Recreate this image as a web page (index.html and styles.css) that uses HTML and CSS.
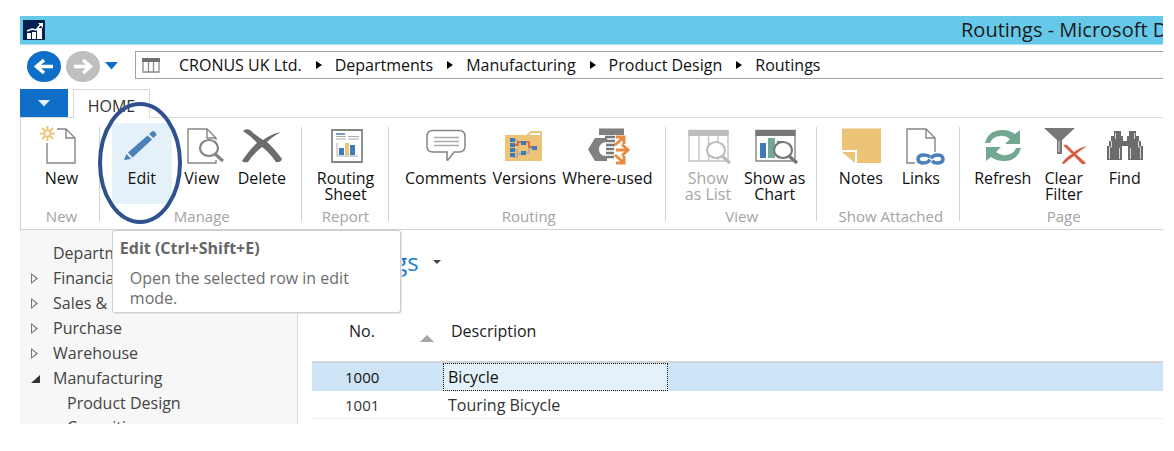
FILE: index.html
```html
<!DOCTYPE html>
<html lang="en">
<head>
<meta charset="utf-8">
<title>Routings</title>
<link rel="stylesheet" href="styles.css">
</head>
<body>
<div class="window">
  <header class="titlebar">
    <svg class="app-icon" viewBox="0 0 22 20" aria-hidden="true"><rect width="22" height="20" fill="#04204f"/><path d="M4 13h4v6H4zM9 12h4v7H9zM14 8h5v11h-5z" fill="#fff"/><path d="M4 11l5-2 4 1 5-6" fill="none" stroke="#fff" stroke-width="1.500"/><path d="M15 3h5v5z" fill="#fff"/></svg>
    <span class="window-title">Routings - Microsoft D</span>
  </header>

  <div class="navbar">
    <button class="nav-btn" aria-label="Back"><svg width="34" height="31" viewBox="0 0 34 31"><ellipse cx="17" cy="15.500" rx="17" ry="15.500" fill="#0f6fc8"/><path d="M26 15.500H10M17 9l-7.500 6.500L17 22" fill="none" stroke="#fff" stroke-width="3.500"/></svg></button>
    <button class="nav-btn" aria-label="Forward"><svg width="34" height="31" viewBox="0 0 34 31"><ellipse cx="17" cy="15.500" rx="17" ry="15.500" fill="#bfbfbf"/><path d="M8 15.500h16M17 9l7.500 6.500L17 22" fill="none" stroke="#fff" stroke-width="3.500"/></svg></button>
    <button class="nav-btn" aria-label="History"><svg width="13" height="8" viewBox="0 0 13 8"><path d="M0 0h13L6.500 7.500z" fill="#0f6fc8"/></svg></button>
    <nav class="address" aria-label="Breadcrumb">
      <svg class="address-icon" width="18" height="15" viewBox="0 0 18 15"><path d="M1 1h16v13H1zM6.500 4v10M11.500 4v10" fill="none" stroke="#8b8b8b" stroke-width="1.300"/><path d="M0 0h18v4H0z" fill="#707070"/></svg>
      <a href="#">CRONUS UK Ltd.</a><i class="crumb-arrow"></i>
      <a href="#">Departments</a><i class="crumb-arrow"></i>
      <a href="#">Manufacturing</a><i class="crumb-arrow"></i>
      <a href="#">Product Design</a><i class="crumb-arrow"></i>
      <a href="#">Routings</a>
    </nav>
  </div>

  <div class="tabs">
    <button class="file-tab" aria-label="Application menu"><svg width="12" height="7" viewBox="0 0 12 7"><path d="M0 0h12L6 6.500z" fill="#e6f2fb"/></svg></button>
    <button class="tab">HOME</button>
  </div>

  <div class="ribbon">
    <section class="group g-new">
      <div class="tools">
        <button class="tool"><svg class="icon" viewBox="0 0 44 40"><path d="M7 17v20h28V12l-9-9h-9M26 3v9h9" fill="none" stroke="#858585" stroke-width="1.400"/><path d="M7.500 0v5M7.500 10v5M0 7.500h5M10 7.500h5M2 2l3.500 3.500M9.500 9.500L13 13M13 2L9.500 5.500M5.500 9.500L2 13" stroke="#eec377" stroke-width="2"/><circle cx="7.500" cy="7.500" r="3" fill="none" stroke="#eec377" stroke-width="1.500"/></svg><span>New</span></button>
      </div>
      <h2>New</h2>
    </section>
    <section class="group g-manage">
      <div class="tools">
        <div class="tool-anchor">
          <button class="tool active" aria-describedby="edit-tip"><svg class="icon" viewBox="0 0 44 40"><path d="M4 34l2.500-6 4.500 5zM8 26.500L27.500 9.500l4.500 4L12.500 31.500zM29 8l3-2.500q1.500-1 3 .5t1.500 3L33.500 12z" fill="#4a81b9"/></svg><span>Edit</span></button>
          <div class="tooltip" id="edit-tip" role="tooltip"><strong>Edit (Ctrl+Shift+E)</strong><p>Open the selected row in edit mode.</p></div>
          <svg class="marker" viewBox="0 0 84 122" aria-hidden="true"><ellipse cx="42" cy="61" rx="40" ry="59" fill="none" stroke="#2f528f" stroke-width="4"/></svg>
        </div>
        <button class="tool"><svg class="icon" viewBox="0 0 44 40"><path d="M36 14v-2l-9-9H8v34h28v-3M27 3v9h9" fill="none" stroke="#858585" stroke-width="1.400"/><ellipse cx="29" cy="22" rx="9" ry="8" fill="#fff" stroke="#858585" stroke-width="2.200"/><path d="M35 28l8 7" stroke="#858585" stroke-width="3.400"/></svg><span>View</span></button>
        <button class="tool"><svg class="icon" viewBox="0 0 44 40"><path d="M3 5q3-3 7-1 5 5 13 10 10-7 18-8-9 5-14 10 7 6 15 17-2 4-6 3-7-10-14-15-8 6-14 15-5 1-6-1 7-11 15-18Q11 10 3 5z" fill="#6c6c6c"/></svg><span>Delete</span></button>
      </div>
      <h2>Manage</h2>
    </section>
    <section class="group g-report">
      <div class="tools">
        <button class="tool"><svg class="icon" viewBox="0 0 44 40"><path d="M8 4h30v32H8z" fill="#fff" stroke="#858585" stroke-width="1.800"/><path d="M12 8h9" stroke="#4a81b9" stroke-width="1.500"/><path d="M12 10.500h10M12 13h10M24 10.500h11M24 13h11M13 17v13h21" fill="none" stroke="#aaa"/><path d="M15 22h5v7h-5zM26 19h5v10h-5z" fill="#3d7ab8"/><path d="M21 17h4v12h-4z" fill="#edc477"/></svg><span>Routing<br>Sheet</span></button>
      </div>
      <h2>Report</h2>
    </section>
    <section class="group g-routing">
      <div class="tools roomy">
        <button class="tool"><svg class="icon" viewBox="0 0 44 40"><path d="M9 4.500h26q6 0 6 6V20q0 6-6 6h-5l-6 8h-1v-8H9q-6 0-6-6v-9.500q0-6 6-6z" fill="#fff" stroke="#858585" stroke-width="1.500"/><path d="M10 11.500h25M10 15.500h25M10 19.500h25" stroke="#aaa" stroke-width="1.400"/></svg><span>Comments</span></button>
        <button class="tool"><svg class="icon" viewBox="0 0 44 40"><path d="M3 9h21l5-4h11v30H3z" fill="#edc477"/><path d="M27 9l3-2h8v2z" fill="#fff"/><path d="M11 14h4v5M12 24h3v7h-4M15 28h8M24 27h3v-5h4" fill="none" stroke="#a9a9a9" stroke-width="1.300"/><path d="M12 19h4v-3h11v5h5" fill="none" stroke="#dc5535" stroke-width="1.600"/><path d="M8 12h5v4H8zM8 17h5v4H8zM8 22h5v4H8zM8 27h5v4H8zM19 15h5v4h-5zM19 25h5v4h-5zM30 20h5v4h-5z" fill="#3d7ab8"/></svg><span>Versions</span></button>
        <button class="tool"><svg class="icon" viewBox="0 0 44 40"><path d="M14 2.500h25V9H14zM10 12h12v4h-1q-7 1-7 7.500t7 6.500h1v5H10L3 23.500z" fill="#808080"/><path d="M20 11h10M21 15h9M21 19h9M21 23h8M21 27h8M21 31h8" stroke="#777" stroke-width="2.500"/><path d="M31 24h12" stroke="#e98b3e" stroke-width="3"/><path d="M37 18.500l6 5.500-6 5.500M30 19l9-8M31 11h8v7M30 29l9 8M39 30v7h-8" fill="none" stroke="#e98b3e" stroke-width="3"/></svg><span>Where-used</span></button>
      </div>
      <h2>Routing</h2>
    </section>
    <section class="group g-view">
      <div class="tools roomy">
        <button class="tool" disabled><svg class="icon" viewBox="0 0 44 40"><path d="M3 4.500h39V35H3zM13 10v25M22.500 10v25M32 10v25" fill="none" stroke="#c4c4c4" stroke-width="1.400"/><path d="M2.500 4h40v6h-40z" fill="#bdbdbd"/><ellipse cx="30" cy="24" rx="9" ry="8" fill="#fff" stroke="#bdbdbd" stroke-width="2.200"/><path d="M36 30l8 7" stroke="#bdbdbd" stroke-width="3.400"/></svg><span>Show<br>as List</span></button>
        <button class="tool"><svg class="icon" viewBox="0 0 44 40"><path d="M3 4.500h39V35H3z" fill="none" stroke="#858585" stroke-width="1.400"/><path d="M2.500 4h40v6h-40z" fill="#777"/><path d="M7 17h6v15H7z" fill="#3d7ab8"/><path d="M15 12h7v20h-7z" fill="#72a892"/><path d="M24 15h6v17h-6z" fill="#777"/><ellipse cx="30" cy="24" rx="9" ry="8" fill="#fff" stroke="#777" stroke-width="2.200"/><path d="M36 30l8 7" stroke="#777" stroke-width="3.400"/></svg><span>Show as<br>Chart</span></button>
      </div>
      <h2>View</h2>
    </section>
    <section class="group g-attached">
      <div class="tools">
        <button class="tool"><svg class="icon" viewBox="0 0 44 40"><path d="M3 2.500h39V37H18V24H3zM3 26h13v11z" fill="#edc477"/></svg><span>Notes</span></button>
        <button class="tool"><svg class="icon" viewBox="0 0 44 40"><path d="M36 26V12l-9-9H8v34h8M27 3v9h9" fill="none" stroke="#858585" stroke-width="1.400"/><g fill="none" stroke="#4a81b9" stroke-width="3.500"><path d="M31 33.500q-2 3.500-6 3.500-6 0-6-4t6-4q4 0 6 2"/><path d="M33 35q2 2 5 2 6 0 6-4t-6-4q-4 0-6 3.500"/></g></svg><span>Links</span></button>
      </div>
      <h2>Show Attached</h2>
    </section>
    <section class="group g-page">
      <div class="tools">
        <button class="tool"><svg class="icon" viewBox="0 0 44 40"><path d="M4 17Q7 5 20 4q8-.5 14 4l5-4v14H24l5-5q-5-4-10-3-8 1-10 7z" fill="#72a892"/><path d="M4 17Q7 5 20 4q8-.5 14 4l5-4v14H24l5-5q-5-4-10-3-8 1-10 7z" fill="#72a892" transform="rotate(180 22 19.500)"/></svg><span>Refresh</span></button>
        <button class="tool"><svg class="icon" viewBox="0 0 44 40"><path d="M2 2h31L20 14v14h-5V14z" fill="#777"/><path d="M17 15v11" stroke="#ddd"/><path d="M21 19q3-1 5 1l6 6q7-5 13-6-6 4-11 8l10 9q-2 2-4 1l-8-8q-6 4-10 8-2 0-2-1 4-6 10-9z" fill="#da5c3f"/></svg><span>Clear<br>Filter</span></button>
        <button class="tool"><svg class="icon" viewBox="0 0 44 40"><path d="M4 34V20h2v-5h2v-5h3V5h7v5h2v5h4v-5h2V5h7v5h3v5h2v5h2v14H25V20h-6v14z" fill="#6c6c6c"/><path d="M6.500 33V21h2v-6M12.500 13V7M16.500 22v11M27.500 22v11M37.500 33V21h-2v-6M31.500 13V7" fill="none" stroke="#d9d9d9"/></svg><span>Find</span></button>
      </div>
      <h2>Page</h2>
    </section>
  </div>

  <div class="body">
    <nav class="sidebar" aria-label="Departments">
      <ul>
        <li><a href="#">Departments</a></li>
        <li class="closed"><a href="#">Financial Management</a></li>
        <li class="closed"><a href="#">Sales &amp; Marketing</a></li>
        <li class="closed"><a href="#">Purchase</a></li>
        <li class="closed"><a href="#">Warehouse</a></li>
        <li class="open"><a href="#">Manufacturing</a>
          <ul class="sub"><li><a href="#">Product Design</a></li><li><a href="#">Capacities</a></li></ul>
        </li>
      </ul>
    </nav>
    <main class="content">
      <h1>Routings <i class="title-caret"></i></h1>
      <table>
        <colgroup><col class="col-no"><col class="col-desc"><col></colgroup>
        <thead><tr><th class="no">No.<i class="sort"></i></th><th class="desc">Description</th><th></th></tr></thead>
        <tbody>
          <tr class="selected"><td class="no">1000</td><td class="focused">Bicycle</td><td></td></tr>
          <tr><td class="no">1001</td><td>Touring Bicycle</td><td></td></tr>
        </tbody>
      </table>
    </main>
  </div>
</div>
</body>
</html>
```
FILE: styles.css
```css
* { box-sizing: border-box; }
body {
  margin: 0;
  height: 100vh;
  padding: 16px 11px 27px 20px;
  background: #fff;
  color: #1a1a1a;
  font: 16px/20px "Open Sans", "Noto Sans", sans-serif;
}
button { border: 0; padding: 0; background: none; font: inherit; color: inherit; }
a { color: inherit; text-decoration: none; }
h1, h2, p, ul { margin: 0; padding: 0; font-weight: normal; list-style: none; }
svg { display: block; }

.window { height: 100%; display: flex; flex-direction: column; overflow: hidden; }

.titlebar {
  flex: none;
  height: 29px;
  display: flex;
  align-items: center;
  justify-content: space-between;
  padding-left: 3px;
  background: #66c9e9;
  border-bottom: 1px solid #a9e0f2;
}
.app-icon { width: 22px; height: 20px; }
.window-title { width: 202px; overflow: hidden; white-space: nowrap; font-size: 20px; line-height: 28px; }

.navbar { flex: none; height: 44px; display: flex; align-items: center; gap: 5px; padding-left: 7px; }
.nav-btn { flex: none; margin-bottom: 2px; }
.address {
  flex: 1;
  height: 28px;
  margin: 0 0 4px 12px;
  display: flex;
  align-items: center;
  border: 1px solid #a3a3a3;
  border-right: 0;
  padding-left: 6px;
  white-space: nowrap;
  color: #111;
}
.address-icon { margin-right: 19px; }
.crumb-arrow {
  margin: 0 13px 0 14px;
  border: 4px solid transparent;
  border-left: 6px solid #000;
  border-right: 0;
}

.tabs { flex: none; height: 29px; display: flex; align-items: stretch; gap: 5px; border-bottom: 1px solid #dcdcdc; }
.file-tab { width: 48px; display: flex; align-items: center; justify-content: center; background: #0f6fc8; }
.tab { width: 77px; margin-bottom: -1px; padding-top: 4px; border: 1px solid #d9d9d9; border-bottom: 0; background: #fff; color: #333; }

.ribbon { flex: none; display: flex; height: 112px; padding: 5px 0 0; border: 1px solid #d2d2d2; border-top: 0; border-right: 0; }
.group { position: relative; display: flex; flex-direction: column; justify-content: space-between; padding: 0 0 3px 2px; min-width: 0; }
.group::after { content: ""; position: absolute; right: 0; top: 4px; bottom: 8px; border-right: 1px solid #d4d4d4; }
.group:last-child::after { display: none; }
.group h2 { text-align: center; font-size: 15px; line-height: 20px; color: #a3a3a3; white-space: nowrap; }
.g-new { flex: 78 1 0; }
.g-manage { flex: 202 1 0; }
.g-report { flex: 89 1 0; padding-left: 0; }
.g-routing { flex: 278 1 0; }
.g-view { flex: 153 1 0; padding-left: 0; }
.g-attached { flex: 141 1 0; padding-left: 4px; }
.g-page { flex: 201 1 0; padding-left: 4px; }
.tools { display: flex; justify-content: center; }
.roomy { gap: 6px; }
.g-page .tools { gap: 1px; }
.tool { min-width: 60px; height: 81px; padding-top: 3px; display: flex; flex-direction: column; align-items: center; line-height: 16px; color: #111; white-space: nowrap; }
.tool span { margin-top: 4px; }
.tool:disabled { color: #a6a6a6; }
.tool.active { background: #e5f1f9; }
.icon { width: 44px; height: 40px; overflow: visible; }
.tool-anchor { position: relative; }
.marker { position: absolute; z-index: 3; left: -14px; top: -21px; width: 84px; height: 122px; pointer-events: none; }
.tooltip {
  position: absolute;
  z-index: 2;
  left: 0;
  top: 107px;
  width: 289px;
  padding: 7px 7px 4px;
  border: 1px solid #cfcfcf;
  border-radius: 3px;
  background: #fff;
  box-shadow: 1px 1px 1px #e4e4e4;
  color: #6d6d6d;
}
.tooltip strong { display: block; color: #666; }
.tooltip p { padding: 10px 20px 0 10px; }

.body { flex: 1; min-height: 0; display: flex; overflow: hidden; }
.sidebar { flex: none; width: 278px; padding-top: 11px; background: #f7f7f7; border-right: 1px solid #d9d9d9; color: #444; overflow: hidden; }
.sidebar li { position: relative; padding-left: 33px; line-height: 25px; white-space: nowrap; }
.sidebar .sub li { padding-left: 14px; line-height: 24px; }
.closed::before, .open::before { content: ""; position: absolute; left: 11px; top: 7px; }
.closed::before { width: 7px; height: 11px; background: #777; clip-path: polygon(evenodd, 0 0, 100% 50%, 0 100%, 0 0, 1px 2px, 1px 9px, 5px 50%, 1px 2px); }
.open::before { top: 9px; border-left: 9px solid transparent; border-bottom: 8px solid #333; }

.content { flex: 1; min-width: 0; padding: 16px 0 0 14px; }
h1 { display: flex; align-items: center; gap: 14px; padding-left: 9px; font-size: 24px; line-height: 32px; color: #2079d0; }
.title-caret { border: 4px solid transparent; border-top-color: #444; border-bottom: 0; }
table { width: 100%; margin-top: 22px; border-collapse: separate; border-spacing: 0; table-layout: fixed; text-align: left; color: #333; }
.col-no { width: 131px; }
.col-desc { width: 225px; }
th { position: relative; height: 63px; padding: 0 8px; border-bottom: 2px solid #d6d6d6; font-weight: normal; color: #222; }
td { height: 28px; padding: 0 5px; line-height: 26px; }
th.no { padding-left: 37px; }
td.no { padding-left: 33px; font-size: 15px; }
.sort { position: absolute; right: 9px; top: 35px; border: 7px solid transparent; border-bottom-color: #a5a5a5; border-top: 0; }
.selected td { background: #cde4f7; color: #111; }
.selected .focused { background: #e4f1fa; border: 1px dotted #111; padding-left: 4px; }
tbody tr:last-child td { border-bottom: 1px solid #ededed; }
```
